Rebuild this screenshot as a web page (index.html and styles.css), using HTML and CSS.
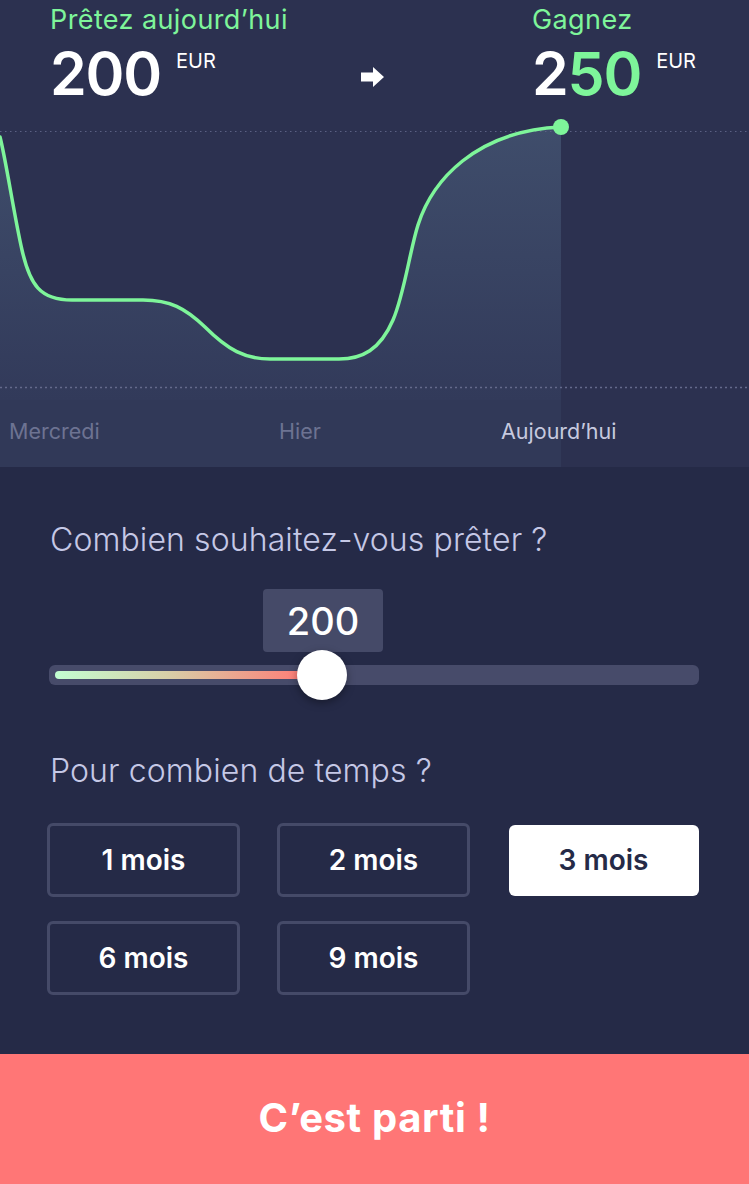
FILE: index.html
```html
<!DOCTYPE html>
<html lang="fr">
<head>
<meta charset="utf-8">
<link rel="stylesheet" href="styles.css">
</head>
<body>
<div class="app">
  <section class="top">
    <header class="summary">
      <div class="amount-block lend">
        <div class="caption">Prêtez aujourd’hui</div>
        <div class="amount"><span class="num">200</span><span class="cur">EUR</span></div>
      </div>
      <div class="arrow">
        <svg width="24" height="22" viewBox="0 0 24 22"><path d="M0 6.5h12V1l11 10-11 10v-5.5H0z" fill="#fff"/></svg>
      </div>
      <div class="amount-block earn">
        <div class="caption">Gagnez</div>
        <div class="amount"><span class="num">2<span class="hl">50</span></span><span class="cur">EUR</span></div>
      </div>
    </header>
    <svg class="chart" width="749" height="290" viewBox="0 110 749 290">
      <defs>
        <linearGradient id="fillg" x1="0" y1="0" x2="0" y2="1">
          <stop offset="0" stop-color="#3f4d6b"/>
          <stop offset="1" stop-color="#323a5a"/>
        </linearGradient>
      </defs>
      <path d="M0,137 C6,160 14,215 22,250 C30,285 40,300 72,300 L143,300 C170,300 185,308 205,327 C228,350 245,359 270,359 L339,359 C362,359 380,350 393,320 C404,295 410,250 418,225 C432,181 475,131 561,127 L561,400 L0,400 Z" fill="url(#fillg)"/>
      <line x1="0" y1="131.5" x2="749" y2="131.5" stroke="#5b6183" stroke-width="1.2" stroke-dasharray="1.5 3.5"/>
      <line x1="0" y1="387.5" x2="749" y2="387.5" stroke="#646a8b" stroke-width="1.5" stroke-dasharray="2 3"/>
      <path d="M0,137 C6,160 14,215 22,250 C30,285 40,300 72,300 L143,300 C170,300 185,308 205,327 C228,350 245,359 270,359 L339,359 C362,359 380,350 393,320 C404,295 410,250 418,225 C432,181 475,131 561,127" fill="none" stroke="#7ef59a" stroke-width="3.5" stroke-linecap="round"/>
      <circle cx="561" cy="127" r="8" fill="#7ef59a"/>
    </svg>
    <div class="axis">
      <span class="day d1">Mercredi</span>
      <span class="day d2">Hier</span>
      <span class="day d3 today">Aujourd’hui</span>
    </div>
  </section>

  <section class="form">
    <h2 class="question q1">Combien souhaitez-vous prêter ?</h2>
    <div class="slider">
      <div class="bubble">200</div>
      <div class="track">
        <div class="fill" style="width:250px"></div>
        <div class="thumb"></div>
      </div>
    </div>
    <h2 class="question q2">Pour combien de temps ?</h2>
    <div class="options">
      <button class="opt">1 mois</button>
      <button class="opt">2 mois</button>
      <button class="opt selected">3 mois</button>
      <button class="opt">6 mois</button>
      <button class="opt">9 mois</button>
    </div>
  </section>

  <button class="cta">C’est parti !</button>
</div>
</body>
</html>
```
FILE: styles.css
```css
* { box-sizing: border-box; }
html, body { margin: 0; padding: 0; }
body {
  background: #252a47;
  font-family: Inter, "Liberation Sans", sans-serif;
  -webkit-font-smoothing: antialiased;
}
.app {
  width: 749px;
  height: 1184px;
  display: flex;
  flex-direction: column;
  overflow: hidden;
}
.top {
  background: #2c3150;
  height: 467px;
  flex: none;
}
.summary {
  display: flex;
  height: 110px;
  padding-left: 50px;
  padding-top: 5px;
}
.amount-block { display: flex; flex-direction: column; }
.lend { width: 310px; }
.caption {
  color: #7ef59a;
  font-size: 27px;
  line-height: 30px;
  font-weight: 400;
  letter-spacing: 0.4px;
}
.amount {
  display: flex;
  align-items: flex-start;
  margin-top: 4px;
}
.num {
  color: #fff;
  font-size: 59px;
  line-height: 70px;
  font-weight: 600;
  letter-spacing: -1.2px;
}
.hl { color: #7ef59a; }
.cur {
  color: #fff;
  font-size: 20px;
  line-height: 24px;
  margin-left: 15px;
  margin-top: 10px;
}
.arrow {
  width: 172px;
  padding-top: 61px;
  padding-left: 1px;
}
.chart { display: block; }
.axis {
  display: flex;
  height: 67px;
  align-items: center;
  background: linear-gradient(to right, #313958 0, #313958 561px, transparent 561px);
  font-size: 21.5px;
  padding-bottom: 6px;
}
.day { color: #6d7392; }
.d1 { margin-left: 9px; width: 270px; }
.d2 { width: 222px; }
.today { color: #c6c9df; }

.form {
  flex: 1;
  padding: 0 50px 0 49px;
}
.question {
  margin: 0;
  color: #c5c8e6;
  font-size: 32px;
  font-weight: 300;
  line-height: 36px;
  padding-left: 1px;
  letter-spacing: 0.1px;
}
.q1 { margin-top: 55px; }
.slider { margin-top: 31px; }
.bubble {
  margin-left: 214px;
  width: 120px;
  height: 63px;
  background: #454a68;
  border-radius: 4px;
  color: #fff;
  font-size: 38px;
  font-weight: 500;
  display: flex;
  align-items: center;
  justify-content: center;
}
.track {
  position: relative;
  margin-top: 13px;
  height: 20px;
  border-radius: 6px;
  background: #474b6a;
  padding: 6px;
}
.fill {
  height: 8px;
  border-radius: 4px;
  background: linear-gradient(to right, #c2ffd2, #d8cfa8 45%, #ff7c76);
}
.thumb {
  position: absolute;
  left: 248px;
  top: -15px;
  width: 50px;
  height: 50px;
  border-radius: 50%;
  background: #fff;
  box-shadow: 0 3px 8px rgba(0,0,0,0.35);
}
.q2 { margin-top: 68px; }
.options {
  margin-top: 34px;
  margin-left: -2px;
  display: grid;
  grid-template-columns: repeat(3, 193px);
  grid-auto-rows: 74px;
  column-gap: 37px;
  row-gap: 24px;
}
.opt {
  font-family: inherit;
  background: transparent;
  border: 3px solid #454a68;
  border-radius: 6px;
  color: #fff;
  font-size: 28px;
  font-weight: 600;
  padding: 0;
}
.opt.selected {
  margin: 1.5px;
  border: 0;
  background: #fff;
  color: #252a47;
}
.cta {
  flex: none;
  height: 130px;
  border: 0;
  background: #ff7676;
  color: #fff;
  font-family: inherit;
  font-size: 40px;
  font-weight: 700;
  letter-spacing: 0.6px;
  padding: 0 0 4px;
}
```
